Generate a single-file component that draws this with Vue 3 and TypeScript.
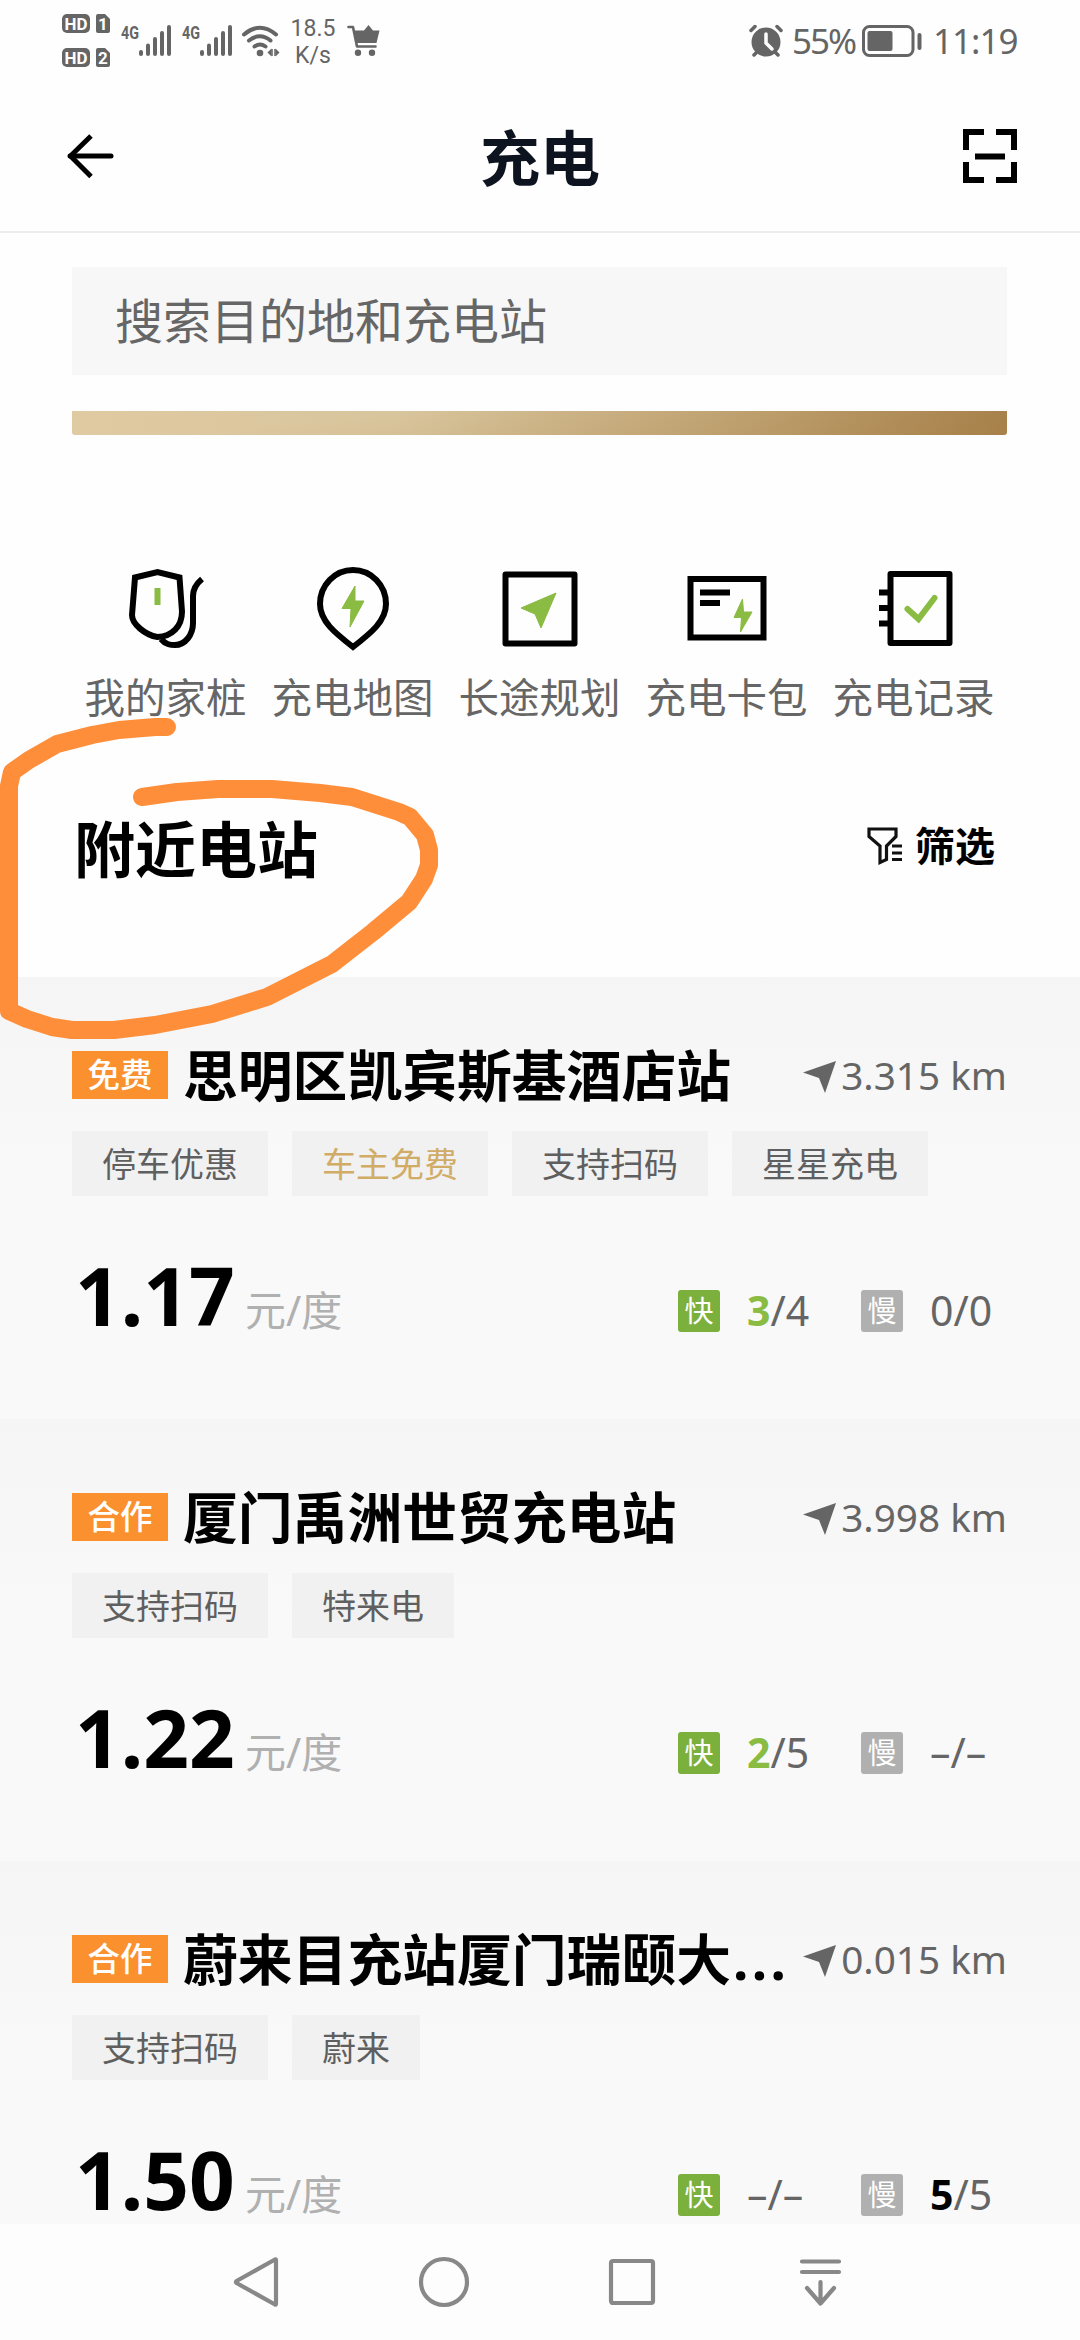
<script setup lang="ts">
type Stock = { free?: string; rest: string }
type Station = {
  badge: string
  name: string
  clipped?: boolean
  distance: string
  tags: { text: string; gold?: boolean }[]
  price: string
  fast: Stock
  slow: Stock
}

const shortcuts = [
  { id: 'pile', label: '我的家桩' },
  { id: 'map', label: '充电地图' },
  { id: 'route', label: '长途规划' },
  { id: 'card', label: '充电卡包' },
  { id: 'record', label: '充电记录' },
]

const stations: Station[] = [
  {
    badge: '免费',
    name: '思明区凯宾斯基酒店站',
    distance: '3.315 km',
    tags: [{ text: '停车优惠' }, { text: '车主免费', gold: true }, { text: '支持扫码' }, { text: '星星充电' }],
    price: '1.17',
    fast: { free: '3', rest: '/4' },
    slow: { rest: '0/0' },
  },
  {
    badge: '合作',
    name: '厦门禹洲世贸充电站',
    distance: '3.998 km',
    tags: [{ text: '支持扫码' }, { text: '特来电' }],
    price: '1.22',
    fast: { free: '2', rest: '/5' },
    slow: { rest: '–/–' },
  },
  {
    badge: '合作',
    name: '蔚来目充站厦门瑞颐大',
    clipped: true,
    distance: '0.015 km',
    tags: [{ text: '支持扫码' }, { text: '蔚来' }],
    price: '1.50',
    fast: { rest: '–/–' },
    slow: { free: '5', rest: '/5' },
  },
]
</script>

<template>
  <div class="screen">
    <div class="status">
      <div class="hd">
        <svg v-for="n in 2" :key="n" width="48" height="19" viewBox="0 0 48 19">
          <rect width="28" height="19" rx="5" fill="#656565" />
          <text x="14" y="15.5" text-anchor="middle" class="hd-text" textLength="23" lengthAdjust="spacingAndGlyphs">HD</text>
          <path d="M36 0h7l5 5v12a2 2 0 0 1-2 2H36a2 2 0 0 1-2-2V2a2 2 0 0 1 2-2z" fill="#656565" />
          <text x="41" y="15.5" text-anchor="middle" class="hd-text">{{ n }}</text>
        </svg>
      </div>
      <svg v-for="n in 2" :key="n" class="signal" width="50" height="31" viewBox="0 0 50 31">
        <text x="0" y="13.500" class="net" textLength="18" lengthAdjust="spacingAndGlyphs">4G</text>
        <path d="M20 27v2M27 20.500v8.500M34 14v15M41 8v21M48 2v27" stroke="#656565" stroke-width="4" stroke-linecap="round" />
      </svg>
      <svg class="wifi" width="38" height="32" viewBox="0 0 38 32">
        <g fill="none" stroke="#656565" stroke-width="4" stroke-linecap="round">
          <path d="M2 9.500Q18 -4 34 9.500" />
          <path d="M7 15.500Q18 7 28.500 15.500" />
          <path d="M12.500 21.500Q18 17.500 23.500 21.500" />
        </g>
        <circle cx="18" cy="28" r="3.300" fill="#656565" />
        <path d="M25.500 27.500l4-4v8zM37.500 27.500l-4-4v8z" fill="#656565" />
        <path d="M30 24v7M33 24v7" stroke="#656565" stroke-width="1.500" />
      </svg>
      <div class="speed"><span>18.5</span><span>K/s</span></div>
      <svg class="cart" width="33" height="33" viewBox="0 0 33 33">
        <path d="M1.500 3h4.500l4 19.500h18.500" fill="none" stroke="#656565" stroke-width="2.600" stroke-linejoin="round" stroke-linecap="round" />
        <path d="M6 6.500h11L21.500 1 26 6.500h6.500L29.500 19H9z" fill="#656565" />
        <circle cx="11" cy="28.800" r="3.200" fill="#656565" /><circle cx="25" cy="28.800" r="3.200" fill="#656565" />
      </svg>
      <div class="status-right">
        <svg width="34" height="32" viewBox="0 0 34 32">
          <circle cx="17" cy="17" r="14.500" fill="#656565" />
          <path d="M2 5.500l4-4M32 5.500l-4-4M5 30l4-4M29 30l-4-4" stroke="#656565" stroke-width="3.500" stroke-linecap="round" />
          <path d="M17 9v9l6 6" fill="none" stroke="#fefefe" stroke-width="3.500" stroke-linecap="round" />
        </svg>
        <span class="percent">55%</span>
        <svg class="battery" width="60" height="32" viewBox="0 0 60 32">
          <rect x="1.500" y="1.500" width="49.500" height="29" rx="6" fill="none" stroke="#656565" stroke-width="3" />
          <rect x="5.500" y="6" width="25" height="20" rx="2" fill="#656565" />
          <rect x="55.500" y="8" width="4" height="17" rx="2" fill="#656565" />
        </svg>
        <span class="time">11:19</span>
      </div>
    </div>

    <header class="header">
      <svg width="54" height="54" viewBox="0 0 54 54" fill="none" stroke="#000" stroke-width="5">
        <path d="M7 27h41" stroke-linecap="round" />
        <path d="M28 7L7.500 27 28 47.500" stroke-linejoin="round" />
      </svg>
      <h1>充电</h1>
      <svg width="54" height="54" viewBox="0 0 54 54" fill="none" stroke="#000" stroke-width="6">
        <path d="M3 21V3h18M33 3h18v18M51 33v18H33M21 51H3V33M12 27.500h30" />
      </svg>
    </header>

    <div class="search">搜索目的地和充电站</div>
    <div class="banner"></div>

    <nav class="shortcuts">
      <div v-for="s in shortcuts" :key="s.id" class="shortcut">
        <svg width="90" height="90" viewBox="0 0 90 90" fill="none" stroke="#000" stroke-width="6">
          <g v-if="s.id === 'pile'" transform="translate(-6 3)">
            <path d="M20 14.500l22.500-5.500 22 5.500 2.500 34c0 15-10 25-24.500 25.500C30 72 17 61 17 52z" />
            <path d="M46 76c5 6 10 6 14 6 10 0 18-10 18-22V33c0-6 3-12 9-17" />
            <path d="M42.500 25v17" stroke="#8abb42" />
          </g>
          <template v-else-if="s.id === 'map'">
            <path d="M45 10c-18 0-33 15-33 34 0 17 15 29 33 43 18-14 33-26 33-43C78 25 63 10 45 10z" />
            <path d="M47 26L34 48.500h9L42 67l14-26H47z" fill="#8abb42" stroke="#8abb42" stroke-width="1" stroke-linejoin="round" />
          </template>
          <template v-else-if="s.id === 'route'">
            <path d="M10.500 14.500h69v69h-69z" stroke-linejoin="round" />
            <path d="M61 33L26 48l14 6 6 14z" fill="#8abb42" stroke="#8abb42" stroke-width="1" />
          </template>
          <template v-else-if="s.id === 'card'">
            <path d="M8.500 19h73v58.500h-73zM18 32.500h30M18 43h20" />
            <path d="M60.500 39L52 57.500h7.500L58.500 72 70 52h-8.500z" fill="#8abb42" stroke="#8abb42" stroke-width="1" stroke-linejoin="round" />
          </template>
          <template v-else>
            <path d="M21.500 14h59v69h-59z" stroke-linejoin="round" />
            <path d="M10 32.500h14M10 48h14M10 63.500h14" />
            <path d="M38.500 49l11 10 16-21" stroke="#8abb42" stroke-linecap="round" />
          </template>
        </svg>
        <span>{{ s.label }}</span>
      </div>
    </nav>

    <div class="section">
      <h2>附近电站</h2>
      <div class="filter">
        <svg width="37" height="40" viewBox="0 0 37 40" fill="none" stroke="#111" stroke-width="3.200">
          <path d="M2 3h27v7.500L19.500 20v13.500l-6.500 3V20L2 10.500z" />
          <path d="M25 20h10M25 27h10M25 33.500h10" />
        </svg>
        <span>筛选</span>
      </div>
    </div>

    <main class="list">
      <article v-for="st in stations" :key="st.name" class="station">
        <div class="title-row">
          <span class="badge">{{ st.badge }}</span>
          <h3>{{ st.name }}<span v-if="st.clipped" class="dots">...</span></h3>
          <div class="distance">
            <svg width="34" height="32" viewBox="0 0 34 32"><path d="M33 0L0 11.500l16 5.500 6 15z" fill="#656565" /></svg>
            <span>{{ st.distance }}</span>
          </div>
        </div>
        <div class="tags">
          <span v-for="t in st.tags" :key="t.text" class="tag" :class="{ gold: t.gold }">{{ t.text }}</span>
        </div>
        <div class="bottom">
          <span class="price">{{ st.price }}</span>
          <span class="unit">元/度</span>
          <div class="stocks">
            <div class="stock fast">
              <i>快</i><span><b v-if="st.fast.free">{{ st.fast.free }}</b>{{ st.fast.rest }}</span>
            </div>
            <div class="stock slow">
              <i>慢</i><span><b v-if="st.slow.free">{{ st.slow.free }}</b>{{ st.slow.rest }}</span>
            </div>
          </div>
        </div>
      </article>
    </main>

    <footer class="navbar">
      <svg width="54" height="54" viewBox="0 0 54 54"><path d="M47 5v44q0 1-1 .500L7.500 28q-1-1 0-2L46 4.500q1-.5 1 .5z" /></svg>
      <svg width="54" height="54" viewBox="0 0 54 54"><circle cx="27" cy="27" r="23" /></svg>
      <svg width="54" height="54" viewBox="0 0 54 54"><rect x="6" y="6" width="42" height="42" rx="2" /></svg>
      <svg width="54" height="54" viewBox="0 0 54 54"><path d="M9 6.500h37M9 17h37M27.500 27v21M14 33l13.500 15.500L41 33" /></svg>
    </footer>

    <svg class="scribble" width="450" height="340" viewBox="0 710 450 340">
      <path
        d="M167 727L155 727 119 730 92 735 57 744 29 760 12 772 9 786V1011L27 1019 52 1027 72 1030H114L155 1025 212 1014 267 997 332 964 373 932 409 902 424 879 429 865V850L425 835 410 817 399 812 352 797 320 793 272 789H218L177 792 142 797"
      />
    </svg>
  </div>
</template>

<style>
body {
  margin: 0;
  background: #fefefe;
}
</style>

<style scoped>
.screen {
  position: relative;
  display: flex;
  flex-direction: column;
  width: 1080px;
  height: 2340px;
  overflow: hidden;
  background: #fefefe;
  color: #000;
  font-family: 'Noto Sans', 'Noto Sans CJK SC', sans-serif;
}
svg {
  display: block;
  flex: none;
  overflow: visible;
}
h1,
h2,
h3 {
  margin: 0;
}
.status {
  display: flex;
  align-items: center;
  flex: none;
  height: 81px;
  box-sizing: border-box;
  padding: 0 63px 0 62px;
  color: #656565;
}
.hd {
  display: flex;
  flex-direction: column;
  gap: 15px;
  width: 59px;
}
.hd-text {
  font: bold 17px Roboto, sans-serif;
  fill: #fefefe;
}
.net {
  font: bold 18px Roboto, sans-serif;
  fill: #656565;
}
.signal {
  margin-right: 11px;
}
.wifi {
  margin-left: -1px;
}
.speed {
  display: flex;
  flex-direction: column;
  align-items: center;
  width: 44px;
  margin: 3px 0 0 11px;
  font: 23px/27px Roboto, sans-serif;
}
.cart {
  margin-left: 12px;
}
.status-right {
  display: flex;
  align-items: center;
  margin-left: auto;
  font-size: 35px;
  line-height: 40px;
}
.percent {
  width: 69px;
  margin-left: 9px;
  letter-spacing: -2px;
}
.battery {
  margin-left: 1px;
}
.time {
  width: 84px;
  margin-left: 11px;
  letter-spacing: -1px;
  white-space: nowrap;
}
.header {
  display: flex;
  align-items: center;
  justify-content: space-between;
  flex: none;
  height: 152px;
  box-sizing: border-box;
  padding: 0 63px;
  border-bottom: 2px solid #ededed;
}
.header h1 {
  padding-top: 3px;
  color: #0d131f;
  font-size: 60px;
  line-height: 80px;
}
.search {
  flex: none;
  height: 108px;
  margin: 34px 73px 0 72px;
  padding-left: 43px;
  background: #f7f7f7;
  color: #666;
  font-size: 48px;
  line-height: 108px;
}
.banner {
  flex: none;
  height: 24px;
  margin: 36px 73px 0 72px;
  border-radius: 0 0 3px 3px;
  background: linear-gradient(174deg, transparent 30%, rgba(160, 112, 40, 0.22)),
    linear-gradient(90deg, #dfcaa2, #d9c59d 35%, #c4a97b 68%, #a98552 100%);
}
.shortcuts {
  display: flex;
  flex: none;
  height: 288px;
  margin: 125px 73px 0 72px;
}
.shortcut {
  display: flex;
  flex-direction: column;
  align-items: center;
  width: 187px;
}
.shortcut span {
  margin-top: 20px;
  color: #666;
  font-size: 40.500px;
  line-height: 56px;
}
.section {
  display: flex;
  align-items: center;
  justify-content: space-between;
  flex: none;
  height: 90px;
  margin: -43px 85px 0 74px;
  padding-bottom: 82px;
}
.section h2 {
  font-size: 61px;
  line-height: 90px;
}
.filter {
  display: flex;
  align-items: center;
  gap: 11px;
  padding-bottom: 8px;
  font-size: 40px;
  font-weight: bold;
  line-height: 60px;
}
.list {
  flex: 1;
  min-height: 0;
  overflow: hidden;
}
.station {
  height: 442px;
  box-sizing: border-box;
  padding: 74px 73px 0 72px;
  background: linear-gradient(#f5f5f5, #f9f9f9 45%);
}
.title-row {
  display: flex;
  align-items: center;
  height: 48px;
}
.badge {
  width: 96px;
  height: 48px;
  background: #fb902f;
  color: #fff;
  font-size: 32.500px;
  font-weight: 500;
  line-height: 48px;
  text-align: center;
}
.title-row h3 {
  margin-left: 15px;
  font-size: 54.800px;
  line-height: 64px;
  white-space: nowrap;
}
.dots {
  margin-left: 2px;
  letter-spacing: 3.300px;
}
.distance {
  display: flex;
  align-items: center;
  gap: 4px;
  margin-left: auto;
  color: #656565;
  font-size: 38.700px;
  line-height: 48px;
  white-space: nowrap;
}
.distance svg {
  margin-top: 3px;
}
.tags {
  display: flex;
  gap: 24px;
  margin-top: 32px;
}
.tag {
  height: 65px;
  padding: 0 30px;
  background: #f1f1f1;
  color: #5f5f5f;
  font-size: 34px;
  line-height: 66px;
}
.tag.gold {
  color: #d0ac66;
}
.bottom {
  display: flex;
  align-items: baseline;
  height: 120px;
  margin-top: 39px;
}
.price {
  width: 170px;
  padding-left: 3px;
  font-size: 80px;
  font-weight: bold;
  line-height: 120px;
}
.unit {
  color: #b0b0b0;
  font-size: 41px;
}
.stocks {
  display: flex;
  align-items: baseline;
  margin-left: auto;
}
.stock {
  display: flex;
  align-items: baseline;
  color: #656565;
  font-size: 41px;
}
.stock i {
  width: 42px;
  height: 42px;
  margin-right: 27px;
  border-radius: 3px;
  color: #fff;
  font-size: 29px;
  font-style: normal;
  line-height: 42px;
  text-align: center;
  transform: translateY(-4px);
}
.fast {
  width: 183px;
}
.slow {
  width: 146px;
}
.fast i {
  background: #7cb03d;
}
.slow i {
  background: #b0b0b0;
}
.fast b {
  color: #8abb42;
}
.slow b {
  color: #000;
}
.navbar {
  display: flex;
  align-items: center;
  flex: none;
  gap: 134px;
  height: 116px;
  padding-left: 229px;
  background: #fdfdfd;
}
.navbar svg {
  fill: none;
  stroke: #888;
  stroke-width: 4.200;
  stroke-linecap: round;
  stroke-linejoin: round;
}
.scribble {
  position: absolute;
  left: 0;
  top: 710px;
  fill: none;
  stroke: #ff8e3a;
  stroke-width: 18px;
  stroke-linecap: round;
  stroke-linejoin: round;
}
</style>
